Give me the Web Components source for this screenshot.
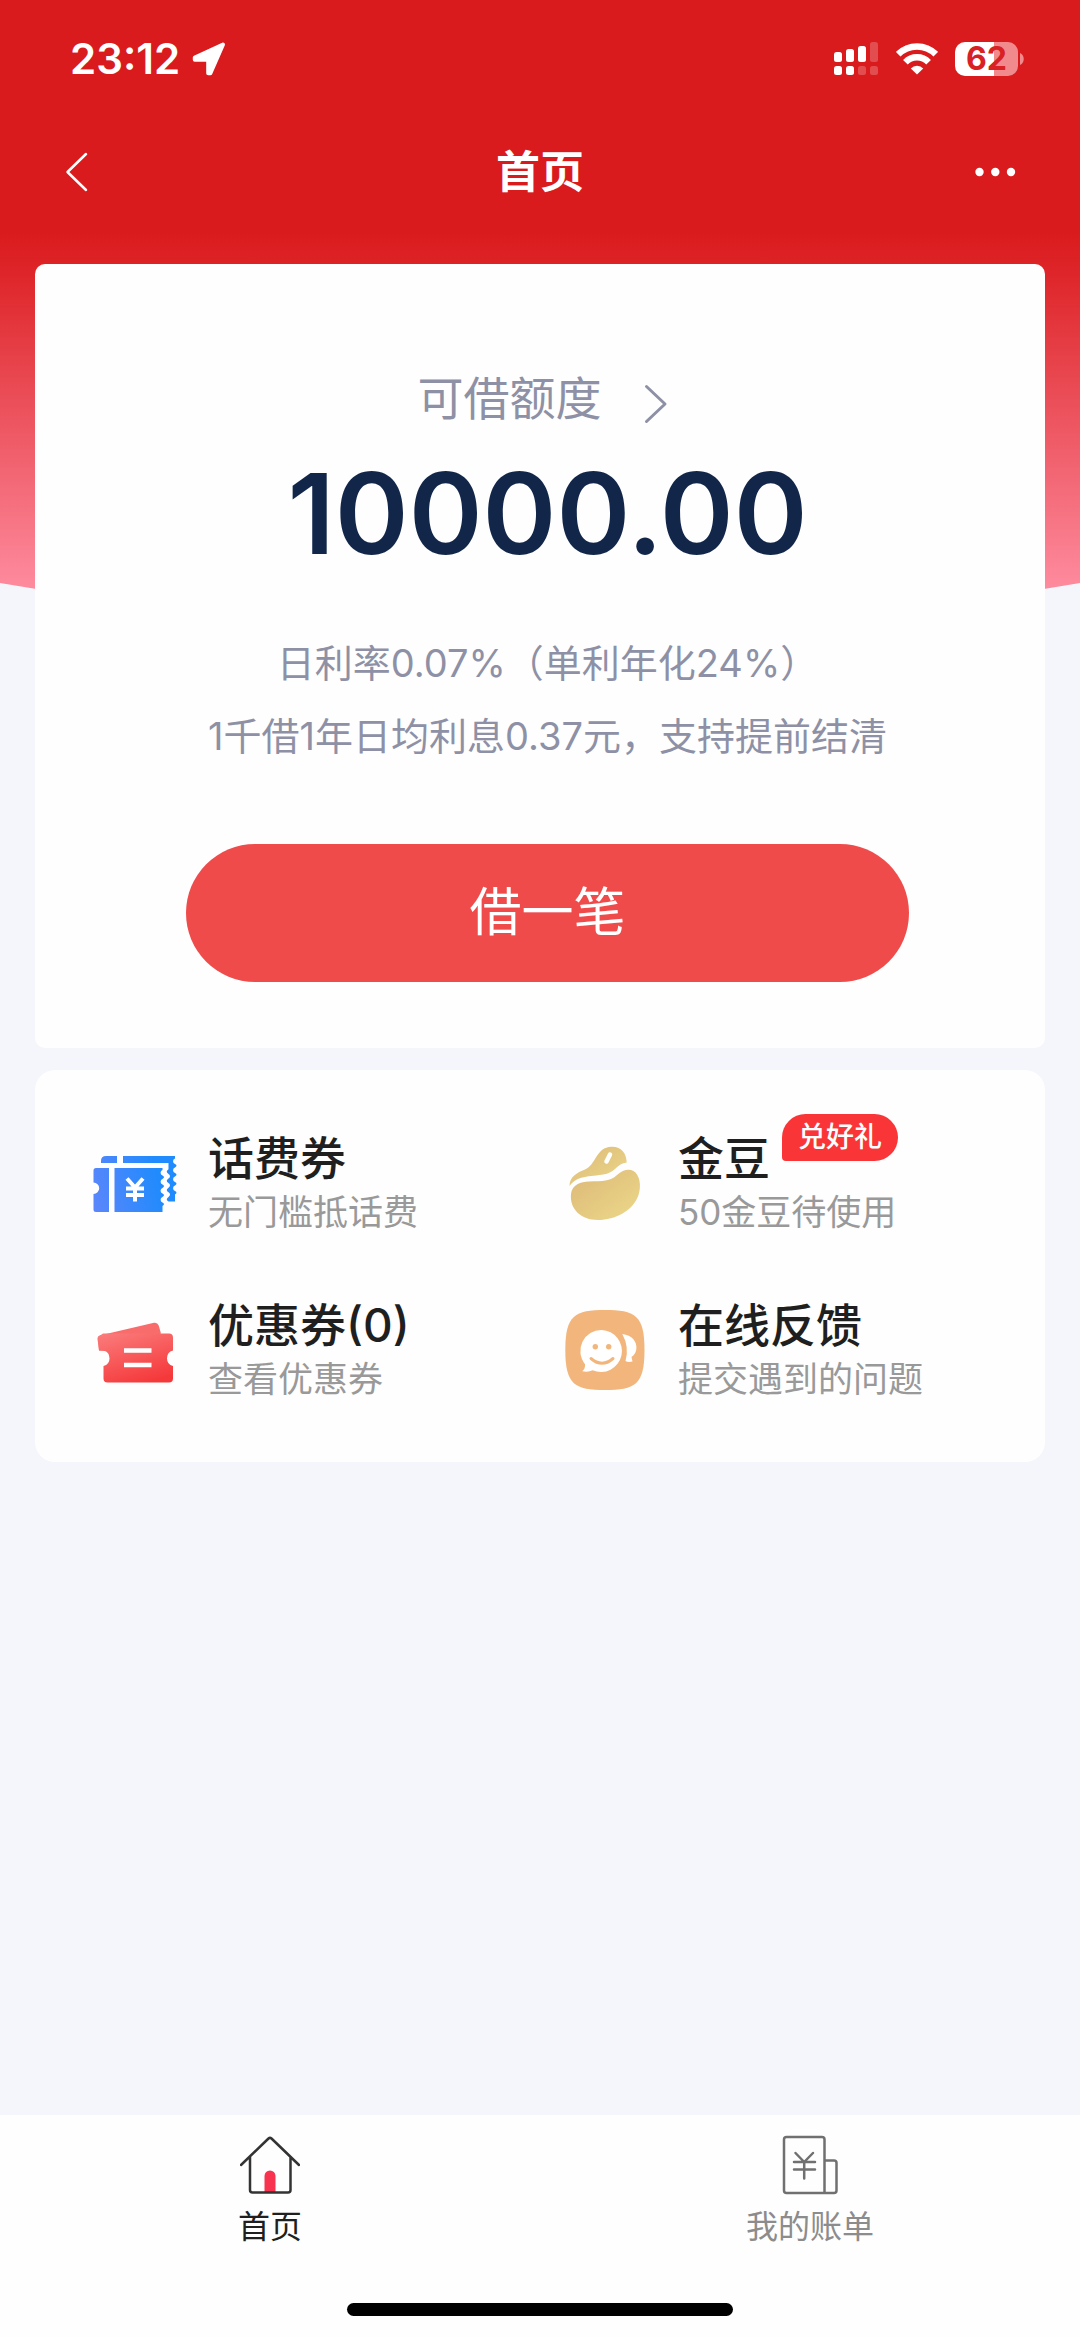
<!DOCTYPE html>
<html lang="zh-CN">
<head>
<meta charset="utf-8">
<meta name="viewport" content="width=device-width, initial-scale=1">
<title>首页</title>
<style>
  html, body { margin: 0; }
  body {
    font-family: Inter, "Noto Sans CJK SC", sans-serif;
    background: #f5f6fb;
    color: #1f1f1f;
  }
</style>
</head>
<body>
<loan-app></loan-app>

<script>
const define = (name, html) => {
  const template = document.createElement('template');
  template.innerHTML = html;
  customElements.define(name, class extends HTMLElement {
    constructor() {
      super();
      this.attachShadow({ mode: 'open' }).append(template.content.cloneNode(true));
    }
  });
};

define('status-bar', `
<style>
  :host { display: flex; align-items: center; justify-content: space-between; height: 118px; padding: 0 56px 0 70px; color: #fff; }
  .group { display: flex; align-items: center; }
  time { font-size: 42px; line-height: 48px; font-weight: 600; }
  .left { gap: 12px; }
  .right { gap: 17px; }
  svg { display: block; }
  .battery { display: flex; align-items: center; gap: 2px; }
  .level { width: 63px; height: 34px; border-radius: 10px; background: linear-gradient(90deg, #fff 62%, #f08a8c 62%);
    color: #d92023; font-size: 32px; line-height: 34px; font-weight: 700; text-align: center; }
</style>
<div class="group left">
  <time>23:12</time>
  <svg width="34" height="34" viewBox="0 0 34 34" aria-hidden="true"><path d="M31 2.5 2.8 15.6v2.2H16.2V31.2h2.2Z" fill="#fff" stroke="#fff" stroke-width="4" stroke-linejoin="round"/></svg>
</div>
<div class="group right">
  <svg width="45" height="34" viewBox="0 0 45 34" fill="#fff" aria-hidden="true">
    <rect x="0" y="10" width="8" height="10" rx="2.5"/><rect x="12" y="7" width="8" height="13" rx="2.5"/><rect x="24" y="4" width="8" height="16" rx="2.5"/>
    <rect x="0" y="24" width="8" height="9" rx="2.5"/><rect x="12" y="24" width="8" height="9" rx="2.5"/>
    <g opacity=".22"><rect x="36" y="0" width="8" height="20" rx="2.5"/><rect x="24" y="24" width="8" height="9" rx="2.5"/><rect x="36" y="24" width="8" height="9" rx="2.5"/></g>
  </svg>
  <svg width="42" height="32" viewBox="0 0 42 32" aria-hidden="true">
    <g fill="none" stroke="#fff" stroke-width="6.5"><path d="M2.2 11.2a26.5 26.5 0 0 1 37.6 0"/><path d="M9.4 19.2a16.2 16.2 0 0 1 23.2 0"/></g>
    <path d="M21 31.5 14.8 25.4a8.8 8.8 0 0 1 12.4 0Z" fill="#fff"/>
  </svg>
  <div class="battery"><div class="level">62</div>
    <svg width="4" height="12" viewBox="0 0 4 12" aria-hidden="true"><path d="M0 0c5 2 5 10 0 12Z" fill="#f08a8c"/></svg></div>
</div>`);

define('nav-bar', `
<style>
  :host { display: grid; grid-template-columns: 1fr auto 1fr; align-items: center; height: 108px; padding: 0 62px; color: #fff; }
  h1 { margin: 0; font-size: 44px; line-height: 60px; font-weight: 600; }
  button { border: 0; padding: 0; background: none; color: inherit; }
  button:first-of-type { justify-self: start; }
  button:last-of-type { justify-self: end; }
  svg { display: block; }
</style>
<button aria-label="返回"><svg width="28" height="40" viewBox="0 0 28 40" fill="none" stroke="#fff" stroke-width="2.5" stroke-linecap="round" stroke-linejoin="round"><path d="M24 2 5.500 20 24 38"/></svg></button>
<h1><slot></slot></h1>
<button aria-label="更多"><svg width="44" height="10" viewBox="0 0 44 10" fill="#fff"><circle cx="5.500" cy="5" r="4.200"/><circle cx="21.300" cy="5" r="4.200"/><circle cx="37" cy="5" r="4.200"/></svg></button>`);

define('quota-card', `
<style>
  :host { display: flex; flex-direction: column; align-items: center; margin: 38px 35px 0; padding: 104px 0 66px 15px; border-radius: 10px; background: #fefefe; color: #8e91a6; }
  a { display: flex; align-items: center; gap: 42px; padding-right: 10px; color: inherit; text-decoration: none; font-size: 46px; line-height: 60px; }
  a svg { display: block; padding-top: 12px; }
  .amount { margin: 25px 0 54px; font-size: 112px; line-height: 120px; font-weight: 600; color: #12264a; }
  p { margin: 0; font-size: 38px; line-height: 73px; }
  button { width: calc(100% - 272px); height: 138px; margin-top: 71px; padding: 0; border: 0; border-radius: 69px; background: #f04b4b; color: #fff; font: inherit; font-size: 52px; line-height: 60px; }
</style>
<a href="#quota"><slot name="label"></slot><svg width="24" height="40" viewBox="0 0 24 40" fill="none" stroke="#8e91a6" stroke-width="3" stroke-linecap="round" stroke-linejoin="round" aria-hidden="true"><path d="M2.500 2.500 21 20 2.500 37.500"/></svg></a>
<div class="amount"><slot name="amount"></slot></div>
<p><slot name="rate"></slot></p>
<p><slot name="note"></slot></p>
<button><slot name="action"></slot></button>`);

define('service-grid', `
<style>
  :host { display: grid; grid-template-columns: 1fr 1fr; row-gap: 59px; margin: 22px 35px 0; padding: 58px 12px 59px 58px; border-radius: 20px; background: #fefefe; }
</style>
<slot></slot>`);

define('service-item', `
<style>
  :host { display: block; }
  a { display: flex; align-items: center; gap: 31px; color: inherit; text-decoration: none; }
  ::slotted(svg) { display: block; flex: none; }
  .title { position: relative; display: inline-block; font-size: 46px; line-height: 60px; font-weight: 500; }
  .sub { font-size: 35px; line-height: 48px; color: #999; }
  ::slotted([slot=badge]) { position: absolute; left: calc(100% + 12px); bottom: 27px; padding: 0 16px; border-radius: 24px 24px 24px 4px; background: #fa3538; color: #fff; font-size: 28px; line-height: 47px; font-weight: 500; white-space: nowrap; }
</style>
<a href="#service"><slot name="icon"></slot>
  <div><div class="title"><slot name="title"></slot><slot name="badge"></slot></div><div class="sub"><slot></slot></div></div></a>`);

define('tab-item', `
<style>
  :host { display: block; }
  a { display: flex; flex-direction: column; align-items: center; gap: 12px; color: inherit; text-decoration: none; font-size: 32px; line-height: 40px; }
  ::slotted(svg) { display: block; }
</style>
<a href="#tab"><slot name="icon"></slot><slot></slot></a>`);

define('tab-bar', `
<style>
  :host { display: block; margin-top: auto; padding: 20px 0 21px; background: #fefefe; }
  nav { display: grid; grid-template-columns: 1fr 1fr; }
  .indicator { width: 386px; height: 13px; margin: 56px auto 0; border-radius: 7px; background: #000; }
</style>
<nav><slot></slot></nav><div class="indicator"></div>`);

define('loan-app', `
<style>
  :host { position: relative; z-index: 0; display: flex; flex-direction: column; min-height: 100vh; }
  /* Curved red header that runs behind the first card */
  :host::before { content: ""; position: absolute; z-index: -1; inset: 0 0 auto; height: 630px;
    background: linear-gradient(#da1b1d 232px, #de2529 272px, #fe8c9f 592px);
    clip-path: circle(3200px at 50% -2571px); }
  .current { color: #1f1f1f; }
  .other { color: #8c8c8c; }
</style>
<status-bar></status-bar>
<nav-bar>首页</nav-bar>
<quota-card>
  <span slot="label">可借额度</span>
  <span slot="amount">10000.00</span>
  <span slot="rate">日利率0.07%（单利年化24%）</span>
  <span slot="note">1千借1年日均利息0.37元，支持提前结清</span>
  <span slot="action">借一笔</span>
</quota-card>
<service-grid>
  <service-item>
    <svg slot="icon" width="84" height="84" viewBox="0 0 84 84" aria-hidden="true">
      <defs><linearGradient id="blue" gradientUnits="userSpaceOnUse" x1="0" y1="60" x2="80" y2="40"><stop stop-color="#5a86fb"/><stop offset=".85" stop-color="#1f8bfd"/></linearGradient></defs>
      <g fill="url(#blue)">
        <path d="M3 28H16V72H3Q.5 72 .5 69.500V54a5.700 5.700 0 0 0 0-11.400V30.500Q.5 28 3 28Z"/>
        <path d="M21.500 28H69.500v2a3 3 0 0 0 0 5.600q3 1.700 0 3.400a3 3 0 0 0 0 5.600q3 1.700 0 3.400a3 3 0 0 0 0 5.600q3 1.700 0 3.400a3 3 0 0 0 0 5.600q3 1.700 0 3.400V72H21.500Z"/>
        <path d="M13 16H24V23H8V21Q8 16 13 16Z"/>
        <path d="M30 16H82v2.500a3 3 0 0 0 0 5.600q3 1.700 0 3.400a3 3 0 0 0 0 5.600q3 1.700 0 3.400a3 3 0 0 0 0 5.600q3 1.700 0 3.400a3 3 0 0 0 0 5.600q3 1.700 0 3.400V61.500H75.500q-3.500-2.300 0-4.600 3-2.400 0-4.600-3.500-2.300 0-4.600 3-2.400 0-4.600-3.500-2.300 0-4.600 3-2.400 0-4.600-3.500-2.300 0-4.600V23H30Z"/>
      </g>
      <path d="M34 38.500 42 47.500 50 38.500M42 47.500V61.500M33 48.500H51M33 55H51" fill="none" stroke="#fff" stroke-width="4"/>
    </svg>
    <span slot="title">话费券</span>无门槛抵话费
  </service-item>
  <service-item>
    <svg slot="icon" width="84" height="84" viewBox="0 0 84 84" aria-hidden="true">
      <defs><linearGradient id="gold" x1="0" y1="0" x2="1" y2="1"><stop stop-color="#dcb877"/><stop offset="1" stop-color="#ecd98a"/></linearGradient></defs>
      <path d="M6.500 46C6.500 37 14 32.500 22 29.500 33 25 33 7 48.500 6.700 59 6.500 63.500 14 63.700 22.500 54 23.500 54 30.500 44 33.700 30 37 15 34 6.500 46Z" fill="url(#gold)"/>
      <path d="M8 54C9 44.500 18 41.700 26 41.500 40 41 47 41.500 54 35 60 29.500 66 28.500 70.500 31 77 35 78.500 46 75.500 55 70 71 52 80 35 80 18 80 6.500 69 8 54Z" fill="url(#gold)"/>
      <path d="M47 14.500 43.500 21.500" stroke="#fff" stroke-width="4.500" stroke-linecap="round"/>
    </svg>
    <span slot="title">金豆</span><span slot="badge">兑好礼</span>50金豆待使用
  </service-item>
  <service-item>
    <svg slot="icon" width="84" height="84" viewBox="0 0 84 84" aria-hidden="true">
      <defs><linearGradient id="red" gradientUnits="userSpaceOnUse" x1="30" y1="16" x2="48" y2="78"><stop stop-color="#fb8080"/><stop offset="1" stop-color="#f5383a"/></linearGradient></defs>
      <path d="M6 43.500 4.500 32Q4.500 29 7.500 28.300L61 15.800Q64.500 15.300 65.700 18.500L68 26.500 12 44Z" fill="#f96c6c"/>
      <path d="M10 26.500H76Q80 26.500 80 30.500V43.500A8 8 0 0 0 80 59V71.500Q80 75.500 76 75.500H14.500Q10.500 75.500 10.500 71.500V59A8 8 0 0 0 10.500 43.500H6L5 30Z" fill="url(#red)"/>
      <path d="M31 43.500H58.500M31 58H58.500" stroke="#fff" stroke-width="4.500"/>
    </svg>
    <span slot="title">优惠券(0)</span>查看优惠券
  </service-item>
  <service-item>
    <svg slot="icon" width="84" height="84" viewBox="0 0 84 84" aria-hidden="true">
      <path d="M42 3C72 3 81.500 8 81.500 43S72 83 42 83 2.300 78 2.300 43 12 3 42 3Z" fill="#f2b67c"/>
      <path d="M38.700 23a21 21 0 1 1-9 40.300Q25 65.500 19.300 64.200 22.500 61.500 22 57.200A21 21 0 0 1 38.700 23ZM59.300 27C69 28 74.500 35 73.300 42.500Q72.500 47 68.500 50L69.500 54.500Q65 55.500 62.500 54 66.500 40 59.300 27Z" fill="#fff"/>
      <circle cx="32.300" cy="39.700" r="2.700" fill="#f2b67c"/><circle cx="45.700" cy="39.700" r="2.700" fill="#f2b67c"/>
      <path d="M28 51.500Q39 61 50 51.500" fill="none" stroke="#f2b67c" stroke-width="3" stroke-linecap="round"/>
    </svg>
    <span slot="title">在线反馈</span>提交遇到的问题
  </service-item>
</service-grid>
<tab-bar>
  <tab-item class="current">
    <svg slot="icon" width="60" height="60" viewBox="0 0 60 60" fill="none" stroke="#333" stroke-width="2.500" stroke-linecap="round" stroke-linejoin="round" aria-hidden="true">
      <path d="M24.500 57V41a5.500 5.500 0 0 1 11 0V57Z" fill="#f8334f" stroke="none"/>
      <path d="M1 30 28.500 3.500Q30 2.300 31.500 3.500L59 30M10 22V55Q10 57.500 12.500 57.500H48Q50.500 57.500 50.500 55V22"/>
    </svg>首页</tab-item>
  <tab-item class="other">
    <svg slot="icon" width="60" height="60" viewBox="0 0 60 60" fill="none" stroke="#707070" stroke-width="2.500" stroke-linecap="round" stroke-linejoin="round" aria-hidden="true">
      <path d="M6.500 2H42Q44.500 2 44.500 4.500V58H6.500Q4 58 4 55.500V4.500Q4 2 6.500 2ZM44.500 25.500H54Q56.500 25.500 56.500 28V55.500Q56.500 58 54 58H44.500M15.500 18 24.200 27 33 18M24.200 27V43.500M14 27H35M14 34.500H35"/>
    </svg>我的账单</tab-item>
</tab-bar>`);
</script>
</body>
</html>
